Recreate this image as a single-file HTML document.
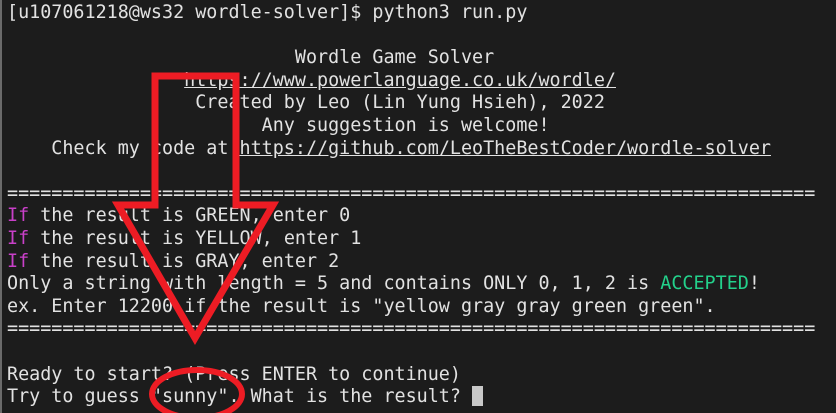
<!DOCTYPE html>
<html><head><meta charset="utf-8"><style>
html,body{margin:0;padding:0;}
body{width:836px;height:413px;background:#1c1c1c;overflow:hidden;position:relative;}
.edge{position:absolute;left:0;top:0;width:2px;height:413px;background:#6a6a6a;}
pre{position:absolute;left:7px;top:2px;margin:0;font-family:"DejaVu Sans Mono","Liberation Mono",monospace;font-size:18.4px;line-height:22.6px;color:#e2e2e2;white-space:pre;}
.m{color:#c940c9;}
.g{color:#23d18b;}
u{text-decoration:underline;}
.cur{display:inline-block;width:11px;height:20px;background:#c8c8c8;vertical-align:-4px;}
svg{position:absolute;left:0;top:0;}
</style></head><body>
<div class="edge"></div>
<pre>[u107061218@ws32 wordle-solver]$ python3 run.py

                          Wordle Game Solver
                <u>https://www.powerlanguage.co.uk/wordle/</u>
                 Created by Leo (Lin Yung Hsieh), 2022
                       Any suggestion is welcome!
    Check my code at <u>https://github.com/LeoTheBestCoder/wordle-solver</u>

=========================================================================
<span class="m">If</span> the result is GREEN, enter 0
<span class="m">If</span> the result is YELLOW, enter 1
<span class="m">If</span> the result is GRAY, enter 2
Only a string with length = 5 and contains ONLY 0, 1, 2 is <span class="g">ACCEPTED</span>!
ex. Enter 12200 if the result is "yellow gray gray green green".
=========================================================================

Ready to start? (Press ENTER to continue)
Try to guess "sunny". What is the result? <span class="cur"></span></pre>
<svg width="836" height="413" viewBox="0 0 836 413">
<path d="M155 76 L236 76 L236 205 L273 205 L195 338 L118 205 L155 205 Z" fill="none" stroke="#ed1c24" stroke-width="7" stroke-linejoin="miter"/>
<ellipse cx="197" cy="394" rx="45" ry="24" fill="none" stroke="#ed1c24" stroke-width="6"/>
</svg>
</body></html>
